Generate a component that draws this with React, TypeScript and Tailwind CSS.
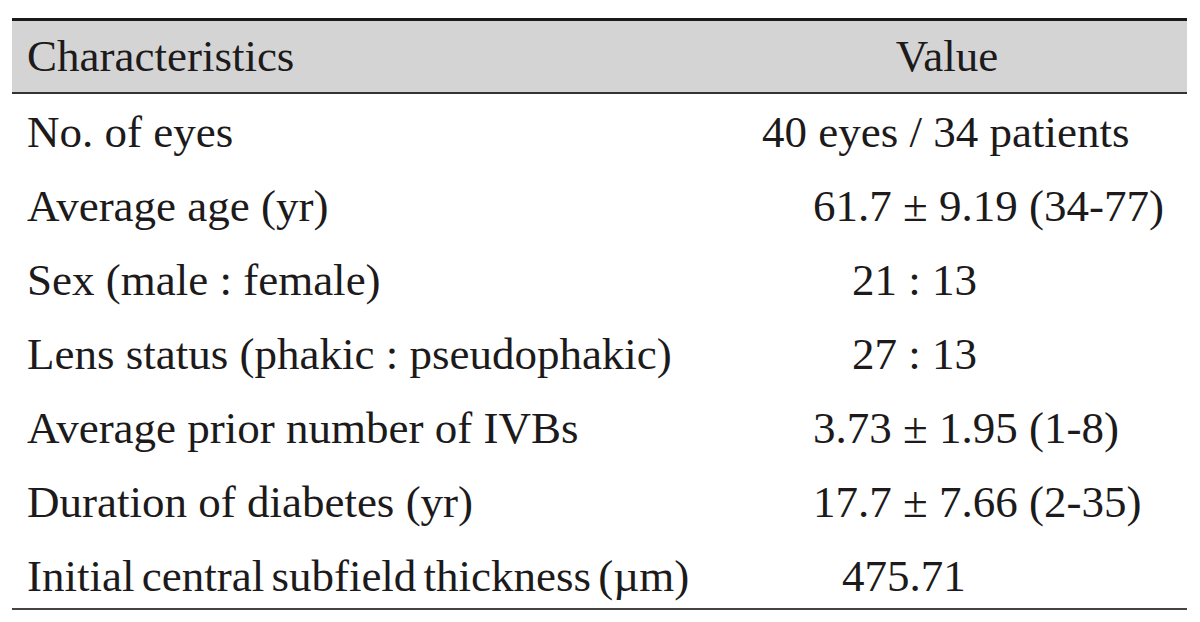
const rows = [
  { label: 'No. of eyes', value: '40 eyes / 34 patients', indent: 'pl-[55px]', tight: false },
  { label: 'Average age (yr)', value: '61.7 ± 9.19 (34-77)', indent: 'pl-[106px]', tight: false },
  { label: 'Sex (male : female)', value: '21 : 13', indent: 'pl-[145px]', tight: false },
  { label: 'Lens status (phakic : pseudophakic)', value: '27 : 13', indent: 'pl-[145px]', tight: false },
  { label: 'Average prior number of IVBs', value: '3.73 ± 1.95 (1-8)', indent: 'pl-[106px]', tight: false },
  { label: 'Duration of diabetes (yr)', value: '17.7 ± 7.66 (2-35)', indent: 'pl-[106px]', tight: false },
  { label: 'Initial central subfield thickness (µm)', value: '475.71', indent: 'pl-[135px]', tight: true },
];

export default function App() {
  return (
    <div className="w-[1200px] h-[622px] bg-white text-[#1c1a1b] font-['Liberation_Serif','Times_New_Roman',serif] text-[45px] pt-[18px] pl-[12px]">
      <div className="w-[1175px]">
        <div className="border-t-[3px] border-b-2 border-t-[#1a1a1a] border-b-[#333] bg-[#d4d4d4] h-[76px] flex leading-[71px]">
          <div className="w-[695px] pl-[15px]">Characteristics</div>
          <div className="flex-1 text-center">Value</div>
        </div>
        <div className="h-[516px] border-b-2 border-[#444] pt-px">
          {rows.map((r) => (
            <div key={r.label} className="flex h-[74px] leading-[74px]">
              <div className={r.tight ? 'w-[695px] pl-[15px] whitespace-nowrap [word-spacing:-4px]' : 'w-[695px] pl-[15px] whitespace-nowrap'}>
                {r.label}
              </div>
              <div className={`flex-1 whitespace-nowrap ${r.indent}`}>{r.value}</div>
            </div>
          ))}
        </div>
      </div>
    </div>
  );
}
